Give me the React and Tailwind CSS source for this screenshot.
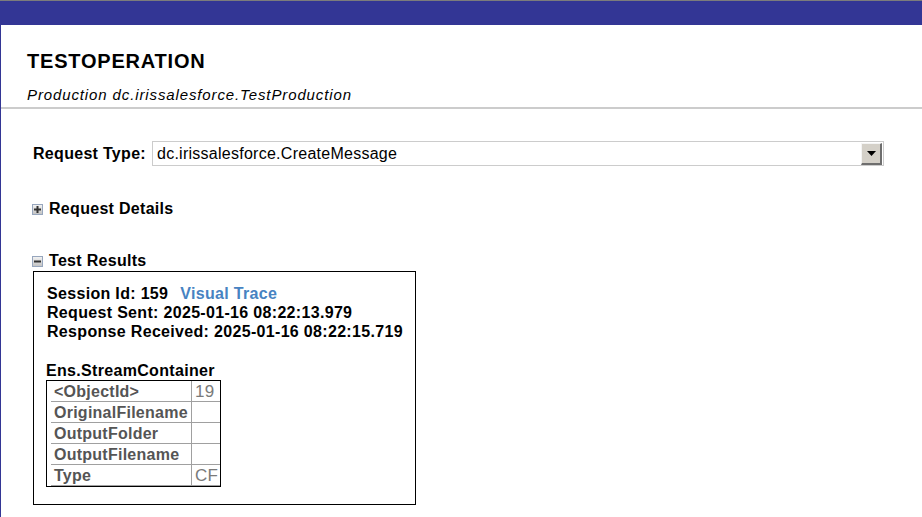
import React from 'react';

const ROWS = [
  { name: '<ObjectId>', value: '19' },
  { name: 'OriginalFilename', value: '' },
  { name: 'OutputFolder', value: '' },
  { name: 'OutputFilename', value: '' },
  { name: 'Type', value: 'CF' },
];

function ToggleIcon({ open }) {
  return (
    <span className="inline-flex w-[11px] h-[11px] items-center justify-center border border-[#97a6bd] bg-gradient-to-b from-[#f2f2f2] to-[#c4c4c4] mr-[6px]">
      <svg width="9" height="9" viewBox="0 0 9 9">
        <rect x="1" y="3.5" width="7" height="2" fill="#333" />
        {!open && <rect x="3.5" y="1" width="2" height="7" fill="#333" />}
      </svg>
    </span>
  );
}

export default function App() {
  return (
    <div className="w-[922px] min-h-[517px] bg-white font-['Liberation_Sans',Arial,sans-serif] text-black overflow-hidden">
      <div className="h-px bg-[#7c7c7c]" />
      <div className="h-[24px] bg-[#333695]" />
      <div className="border-l border-[#333695] min-h-[492px]">
        {/* header */}
        <div className="pt-[25px] pl-[26px]">
          <h1 className="text-[20px] leading-[23px] font-bold tracking-[0.8px]">TESTOPERATION</h1>
          <div className="mt-[13px] text-[15px] leading-[18px] italic tracking-[0.88px]">
            Production dc.irissalesforce.TestProduction
          </div>
        </div>
        <div className="mt-[3px] h-[2px] bg-[#cccccc]" />

        {/* request type */}
        <div className="pl-[32px] mt-[32px] flex items-center h-[25px]">
          <span className="text-[16px] font-bold w-[119px] tracking-[0.3px]">Request Type:</span>
          <div className="w-[732px] h-[25px] border border-[#cccccc] flex items-center justify-between">
            <span className="pl-[4px] text-[16px] tracking-[0.26px]">dc.irissalesforce.CreateMessage</span>
            <span className="w-[21px] h-[22px] mr-px bg-[#d4d0c8] border-t border-l border-[#f4f4f4] border-r-2 border-b-2 border-r-[#6e6e6e] border-b-[#6e6e6e] flex items-center justify-center">
              <svg width="9" height="5" viewBox="0 0 9 5">
                <path d="M0 0 H9 L4.5 5 Z" fill="#000" />
              </svg>
            </span>
          </div>
        </div>

        {/* request details */}
        <div className="pl-[31px] mt-[34px] flex items-center h-[18px] text-[16px] font-bold tracking-[0.3px]">
          <ToggleIcon open={false} />
          Request Details
        </div>

        {/* test results */}
        <div className="pl-[31px] mt-[33px] flex items-center h-[20px] text-[16px] font-bold tracking-[0.3px]">
          <ToggleIcon open={true} />
          Test Results
        </div>

        <div className="ml-[32px] w-[383px] h-[234px] border border-black pt-[12px] pl-[13px] text-[16px] font-bold leading-[19px] tracking-[0.32px]">
          <div>
            Session Id: 159<span className="ml-[12px] text-[#4783c2]">Visual Trace</span>
          </div>
          <div>Request Sent: 2025-01-16 08:22:13.979</div>
          <div>Response Received: 2025-01-16 08:22:15.719</div>
          <div className="mt-[20px] -ml-px">Ens.StreamContainer</div>
          <div className="-ml-px w-[175px] border border-black pl-[4px]">
            {ROWS.map((r) => (
              <div key={r.name} className="flex h-[21px] border-b border-[#a0a0a0]">
                <div className="w-[141px] border-r border-[#a0a0a0] pl-[3px] text-[#555555] leading-[22px] tracking-[0.25px]">{r.name}</div>
                <div className="flex-1 pl-[3px] font-normal text-[#7a7a7a] text-[17px] leading-[22px] tracking-[0.3px]">{r.value}</div>
              </div>
            ))}
          </div>
        </div>
      </div>
    </div>
  );
}
